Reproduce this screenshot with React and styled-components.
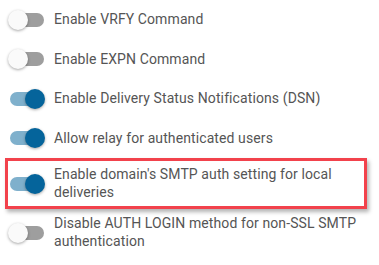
import React from 'react';
import styled, { createGlobalStyle } from 'styled-components';

const GlobalStyle = createGlobalStyle`
  body {
    margin: 0;
    background: #fff;
    font-family: Roboto, "Liberation Sans", sans-serif;
  }
`;

const List = styled.div`
  display: flex;
  flex-direction: column;
  padding: 0 12px 0 5px;
`;

const Row = styled.label`
  display: flex;
  align-items: center;
  box-sizing: border-box;
  min-height: 39.5px;
  padding: ${p => (p.$highlight ? '5px 0 5px 0' : '4.5px 0 4.5px 3px')};
  border: ${p => (p.$highlight ? '3px solid #f2424c' : 'none')};
  box-shadow: ${p => (p.$highlight ? '2px 3px 4px rgba(0, 0, 0, 0.3)' : 'none')};
  margin-bottom: ${p => (p.$highlight ? '1.5px' : '0')};
`;

const Switch = styled.span`
  position: relative;
  flex: 0 0 38px;
  height: 20px;
  align-self: center;
`;

const Track = styled.span`
  position: absolute;
  left: 2px;
  top: 3px;
  width: 34px;
  height: 14px;
  border-radius: 7px;
  background: ${p => (p.$on ? '#7fb0cc' : '#9e9e9e')};
`;

const Thumb = styled.span`
  position: absolute;
  top: 0;
  left: ${p => (p.$on ? '17px' : '0')};
  width: 20px;
  height: 20px;
  border-radius: 50%;
  background: ${p => (p.$on ? '#05649b' : '#fafafa')};
  box-shadow: 0 1px 3px rgba(0, 0, 0, 0.35);
`;

const Text = styled.span`
  margin-left: 8px;
  font-size: 14px;
  line-height: 17.5px;
  letter-spacing: 0.1px;
  color: #555;
`;

const options = [
  { label: 'Enable VRFY Command', on: false },
  { label: 'Enable EXPN Command', on: false },
  { label: 'Enable Delivery Status Notifications (DSN)', on: true },
  { label: 'Allow relay for authenticated users', on: true },
  { label: "Enable domain's SMTP auth setting for local deliveries", on: true, highlight: true },
  { label: 'Disable AUTH LOGIN method for non-SSL SMTP authentication', on: false },
];

function App() {
  return (
    <>
      <GlobalStyle />
      <List>
        {options.map(opt => (
          <Row key={opt.label} $highlight={opt.highlight}>
            <Switch>
              <Track $on={opt.on} />
              <Thumb $on={opt.on} />
            </Switch>
            <Text>{opt.label}</Text>
          </Row>
        ))}
      </List>
    </>
  );
}

export default App;
